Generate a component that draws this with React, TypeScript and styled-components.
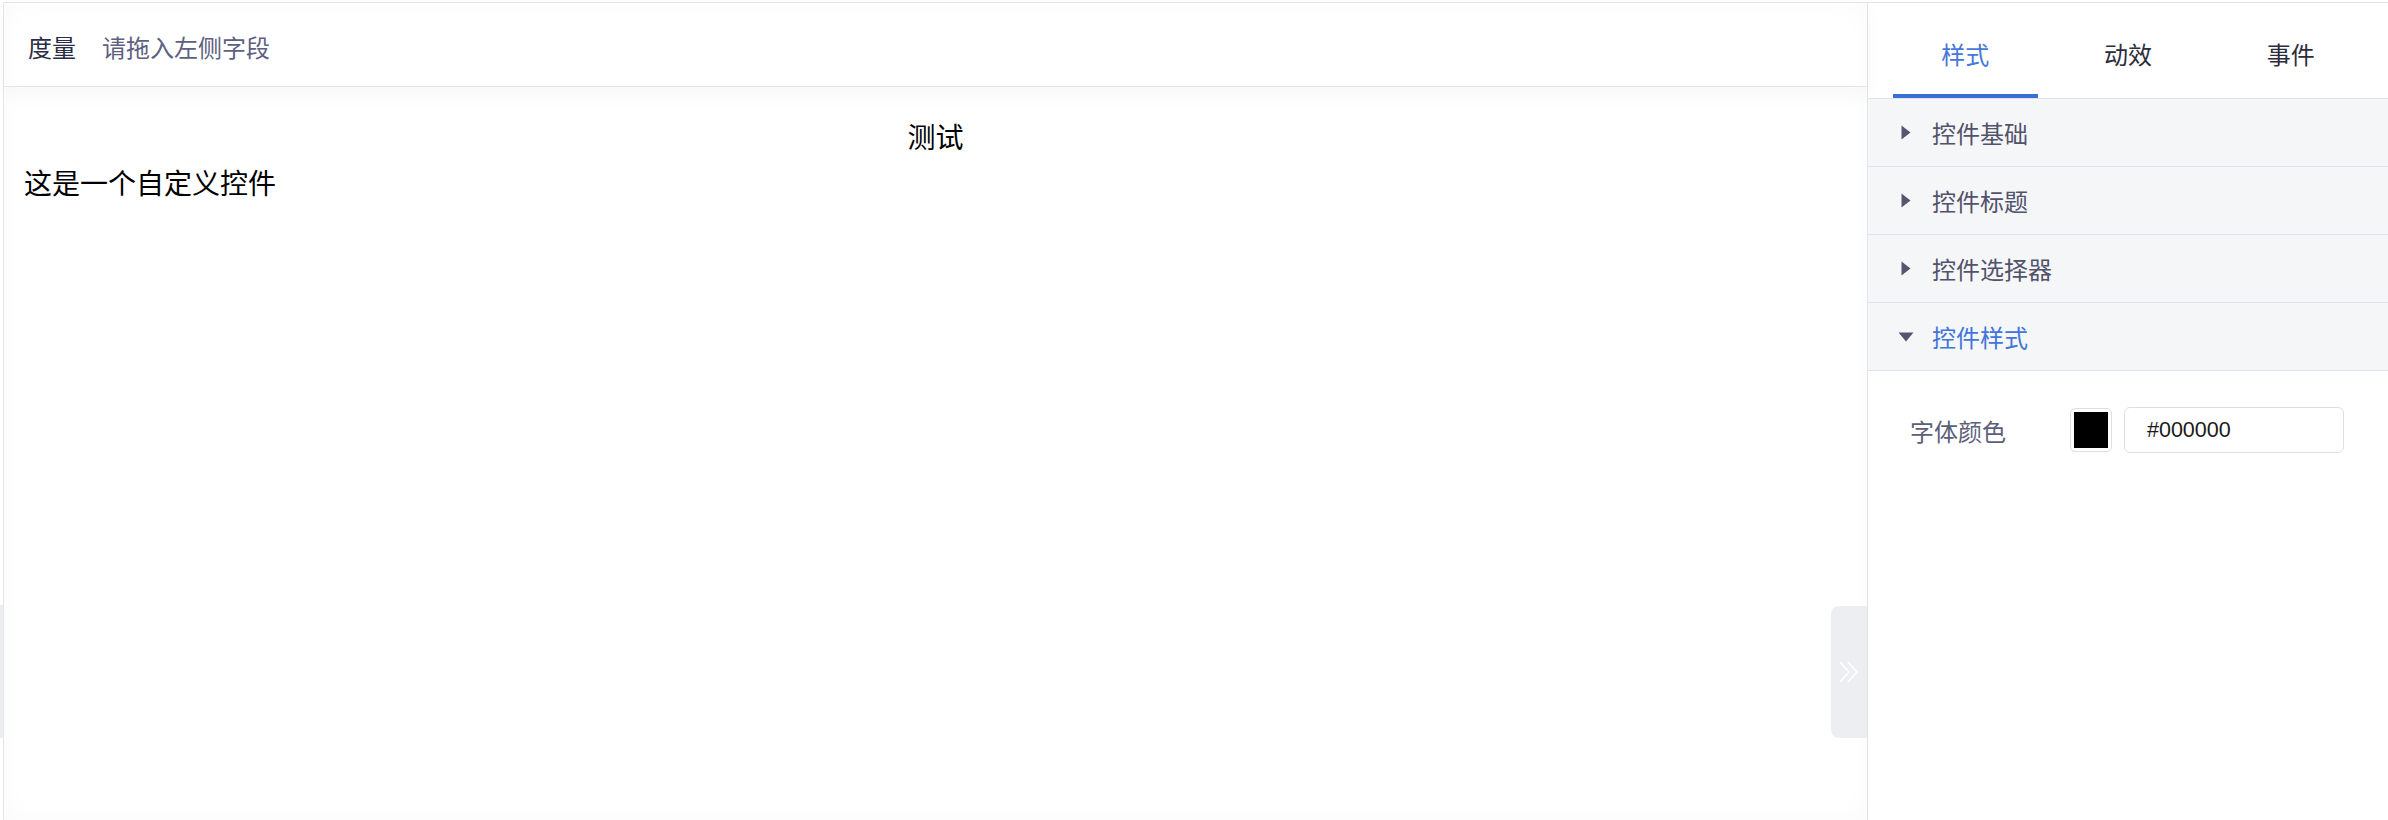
import React from 'react';
import styled, { createGlobalStyle } from 'styled-components';

const GlobalStyle = createGlobalStyle`
  html, body {
    margin: 0;
    padding: 0;
    background: #fff;
    font-family: "Noto Sans CJK SC", "Noto Sans", sans-serif;
  }
  * {
    box-sizing: border-box;
  }
`;

const Page = styled.div`
  display: flex;
  height: 820px;
  padding-top: 2px;
  overflow: hidden;
`;

const Gutter = styled.div`
  position: relative;
  flex: 0 0 3px;
`;

const GutterHandle = styled.div`
  position: absolute;
  top: 603px;
  left: 0;
  width: 3px;
  height: 133px;
  background: #ebedf0;
`;

const Frame = styled.div`
  flex: 1;
  display: flex;
  border-top: 1px solid #e6e6e8;
  border-left: 1px solid #e6e6e8;
`;

const Main = styled.section`
  position: relative;
  flex: 1;
  display: flex;
  flex-direction: column;
  border-right: 1px solid #e3e4e8;
  box-shadow: inset 0 0 26px rgba(0, 0, 0, 0.025);
`;

const Header = styled.div`
  display: flex;
  align-items: center;
  gap: 26px;
  height: 84px;
  padding: 4px 0 0 24px;
  border-bottom: 1px solid #e6e6e8;
  box-shadow: 0 8px 18px rgba(0, 0, 0, 0.035);
  font-size: 24px;
`;

const FieldLabel = styled.span`
  color: #2a2d45;
`;

const Placeholder = styled.span`
  color: #5d6080;
`;

const Canvas = styled.div`
  flex: 1;
  padding: 26px 20px 0 20px;
  color: #000;
  font-size: 28px;
  line-height: 46px;
`;

const Title = styled.div`
  text-align: center;
`;

const CollapseHandle = styled.div`
  position: absolute;
  right: 0;
  top: 603px;
  width: 36px;
  height: 132px;
  display: flex;
  align-items: center;
  justify-content: center;
  background: #eceef1;
  border-radius: 8px 0 0 8px;
`;

const Side = styled.aside`
  flex: 0 0 520px;
  display: flex;
  flex-direction: column;
  background: #fff;
`;

const Tabs = styled.div`
  display: flex;
  height: 96px;
  padding: 0 16px;
  border-bottom: 1px solid #e3e4e8;
`;

const Tab = styled.div<{ active?: boolean }>`
  position: relative;
  flex: 1;
  display: flex;
  align-items: center;
  justify-content: center;
  padding-top: 6px;
  font-size: 24px;
  color: ${p => (p.active ? '#4677da' : '#2b2d3c')};

  &::after {
    content: '';
    position: absolute;
    left: 9px;
    right: 9px;
    bottom: 0;
    height: 4px;
    background: ${p => (p.active ? '#3a6fd8' : 'transparent')};
  }
`;

const Row = styled.div<{ open?: boolean }>`
  display: flex;
  align-items: center;
  height: 68px;
  padding-left: 29px;
  gap: 17px;
  background: #f5f6f7;
  border-bottom: 1px solid #e3e4e8;
  font-size: 24px;
  color: ${p => (p.open ? '#4274d9' : '#51526b')};
`;

const Caret = styled.span`
  flex: 0 0 18px;
  display: flex;
  align-items: center;
  justify-content: center;

  svg {
    flex-shrink: 0;
  }
`;

const Panel = styled.div`
  padding: 36px 0 0 42px;
`;

const FormRow = styled.div`
  display: flex;
  align-items: center;
  height: 46px;
`;

const FormLabel = styled.label`
  width: 160px;
  font-size: 24px;
  color: #5c5f7a;
`;

const Swatch = styled.div<{ color: string }>`
  width: 42px;
  height: 44px;
  padding: 3px;
  border: 1.5px solid #dcdfe3;
  border-radius: 5px;
  background: #fff;

  &::before {
    content: '';
    display: block;
    width: 100%;
    height: 100%;
    background: ${p => p.color};
  }
`;

const HexInput = styled.div`
  display: flex;
  align-items: center;
  margin-left: 12px;
  width: 220px;
  height: 46px;
  padding-left: 22px;
  border: 1.5px solid #dcdfe3;
  border-radius: 6px;
  font-family: "Liberation Sans", Arial, sans-serif;
  font-size: 21.5px;
  color: #1a1a1a;
`;

const RightCaret = () => (
  <svg width="10" height="15" viewBox="0 0 10 15">
    <path d="M0.5 0.5 L9.5 7.5 L0.5 14.5 Z" fill="#55566e" />
  </svg>
);

const DownCaret = () => (
  <svg width="16" height="10" viewBox="0 0 16 10">
    <path d="M0.5 0.5 L15.5 0.5 L8 9.5 Z" fill="#55566e" />
  </svg>
);

const sections = ['控件基础', '控件标题', '控件选择器', '控件样式'];

export default function App() {
  const openIndex = 3;
  return (
    <>
      <GlobalStyle />
      <Page>
        <Gutter>
          <GutterHandle />
        </Gutter>
        <Frame>
          <Main>
            <Header>
              <FieldLabel>度量</FieldLabel>
              <Placeholder>请拖入左侧字段</Placeholder>
            </Header>
            <Canvas>
              <Title>测试</Title>
              <div>这是一个自定义控件</div>
            </Canvas>
            <CollapseHandle>
              <svg width="22" height="24" viewBox="0 0 22 24" fill="none">
                <path d="M2 2 L11 12 L2 22" stroke="#fff" strokeWidth="1.6" />
                <path d="M10 2 L19 12 L10 22" stroke="#fff" strokeWidth="1.6" />
              </svg>
            </CollapseHandle>
          </Main>
          <Side>
            <Tabs>
              <Tab active>样式</Tab>
              <Tab>动效</Tab>
              <Tab>事件</Tab>
            </Tabs>
            {sections.map((s, i) => (
              <Row key={s} open={i === openIndex}>
                <Caret>{i === openIndex ? <DownCaret /> : <RightCaret />}</Caret>
                {s}
              </Row>
            ))}
            <Panel>
              <FormRow>
                <FormLabel>字体颜色</FormLabel>
                <Swatch color="#000" />
                <HexInput>#000000</HexInput>
              </FormRow>
            </Panel>
          </Side>
        </Frame>
      </Page>
    </>
  );
}
